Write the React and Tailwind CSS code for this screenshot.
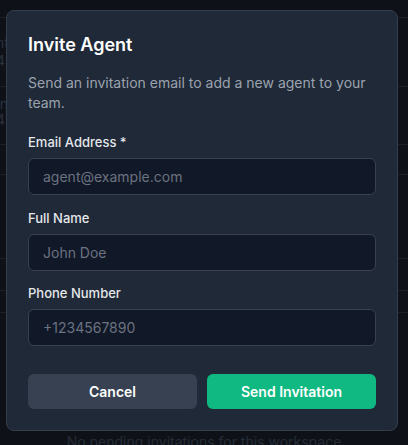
import React from "react";

export default function App() {
  const font = { fontFamily: "Inter, 'Noto Sans', sans-serif" };
  return (
    <div
      className="relative w-[408px] h-[445px] overflow-hidden bg-[#0e1218]"
      style={font}
    >
      {/* background page (dimmed) */}
      <div className="flex flex-col text-[#2a313c] text-sm">
        <div className="h-[18px] border-b border-[#1a202a]" />
        <div className="h-[69px] border-b border-[#1a202a] flex flex-col justify-center -ml-[4px] leading-[18px]">
          <span>nt@</span>
          <span>45</span>
        </div>
        <div className="h-[66px] border-b border-[#1a202a] flex flex-col justify-center -ml-[4px] leading-[16px] -mt-[8px]">
          <span>In</span>
          <span>45</span>
        </div>
        <div className="h-[30px] border-b border-[#1a202a]" />
        <div className="h-[84px] border-b border-[#1a202a]" />
        <div className="h-[32px] border-b border-[#1a202a]" />
        <div className="h-[22px] border-b border-[#1a202a]" />
        <div className="mt-[119px] text-center text-[#252c37] text-sm">
          No pending invitations for this workspace
        </div>
      </div>

      {/* modal */}
      <div className="absolute left-[6px] top-[10px] w-[392px] h-[421px] rounded-lg border border-[#343d4c] bg-[#1f2937] px-[21px] pt-5 pb-5 flex flex-col">
        <h2 className="text-lg leading-7 font-semibold text-white">Invite Agent</h2>
        <p className="mt-[14px] text-sm leading-5 text-[#9ca3af]">
          Send an invitation email to add a new agent to your team.
        </p>

        <label className="mt-[19px] text-[13px] leading-5 font-medium text-[#e5e7eb]">
          Email Address *
        </label>
        <input
          className="mt-1.5 h-[37px] w-full rounded-md border border-[#374151] bg-[#111827] px-[14px] text-sm text-white placeholder:text-[#6b7280] outline-none"
          placeholder="agent@example.com"
          style={font}
        />

        <label className="mt-[13px] text-[13px] leading-5 font-medium text-[#e5e7eb]">
          Full Name
        </label>
        <input
          className="mt-1.5 h-[37px] w-full rounded-md border border-[#374151] bg-[#111827] px-[14px] text-sm text-white placeholder:text-[#6b7280] outline-none"
          placeholder="John Doe"
          style={font}
        />

        <label className="mt-[12px] text-[13px] leading-5 font-medium text-[#e5e7eb]">
          Phone Number
        </label>
        <input
          className="mt-1.5 h-[37px] w-full rounded-md border border-[#374151] bg-[#111827] px-[14px] text-sm text-white placeholder:text-[#6b7280] outline-none"
          placeholder="+1234567890"
          style={font}
        />

        <div className="mt-[28px] flex gap-[10px]">
          <button className="flex-1 h-[35px] rounded-md bg-[#374151] text-sm font-semibold text-white">
            Cancel
          </button>
          <button className="flex-1 h-[35px] rounded-md bg-[#10b981] text-sm font-semibold text-white">
            Send Invitation
          </button>
        </div>
      </div>
    </div>
  );
}
